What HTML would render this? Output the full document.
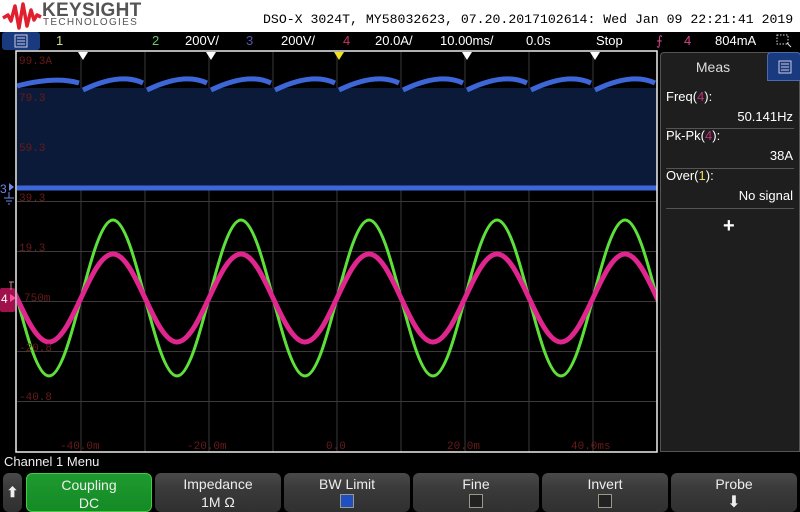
<!DOCTYPE html>
<html><head><meta charset="utf-8"><style>
*{margin:0;padding:0;box-sizing:border-box}
body{width:800px;height:512px;background:#000;overflow:hidden;position:relative;font-family:"Liberation Sans",sans-serif;color:#fff}
.hdr{position:absolute;left:0;top:0;width:800px;height:32px;background:#fff}
.stat{position:absolute;left:0;top:32px;width:800px;height:18px;background:#000;font-size:13px}
.stat span{position:absolute;top:1px}
.panel{position:absolute;left:660px;top:52px;width:140px;height:400px;background:#1e1e1e;border:1px solid #555;border-radius:4px 4px 0 0}
.btn{position:absolute;top:473px;height:39px;border-radius:6px;background:linear-gradient(#4a4a4a,#3a3a3a 40%,#303030);font-size:14px;text-align:center;color:#eee;line-height:18px;padding-top:2px}
.chk{display:inline-block;width:14px;height:14px;border:1px solid #998;background:#222;vertical-align:top;margin-top:1px}
</style></head><body>
<div class="hdr">
<svg width="40" height="30" style="position:absolute;left:2px;top:2px" viewBox="0 0 40 30"><path d="M1,16 L6,13 L9,19 L13,4 L17,26 L21,2 L25,24 L29,8 L32,18 L35,13 L39,15" fill="none" stroke="#e0202e" stroke-width="3.5" stroke-linejoin="round"/></svg>
<div style="position:absolute;left:42px;top:0px;font-size:19px;font-weight:bold;color:#555;letter-spacing:0.3px">KEYSIGHT</div>
<div style="position:absolute;left:43px;top:17px;font-size:10px;color:#555;letter-spacing:1.3px">TECHNOLOGIES</div>
<div style="position:absolute;left:263px;top:12px;font-family:'Liberation Mono',monospace;font-size:13.2px;color:#000;white-space:nowrap">DSO-X 3024T, MY58032623, 07.20.2017102614: Wed Jan 09 22:21:41 2019</div>
</div>
<div class="stat">
<div style="position:absolute;left:2px;top:0;width:38px;height:18px;background:#1a3a80;border-radius:3px"></div>
<svg width="14" height="14" style="position:absolute;left:14px;top:2px"><rect x="1" y="1" width="12" height="12" fill="none" stroke="#ccd" /><path d="M3,4H11M3,7H11M3,10H11" stroke="#ccd"/></svg>
<span style="left:56px;color:#cde080">1</span>
<span style="left:152px;color:#6c6">2</span><span style="left:185px">200V/</span>
<span style="left:246px;color:#55a">3</span><span style="left:281px">200V/</span>
<span style="left:343px;color:#c36">4</span><span style="left:375px">20.0A/</span>
<span style="left:440px">10.00ms/</span><span style="left:526px">0.0s</span>
<span style="left:596px">Stop</span>
<span style="left:656px;color:#d2478a">&#x2A0D;</span><span style="left:684px;color:#d2478a">4</span>
<span style="left:715px">804mA</span>
<svg width="16" height="14" style="position:absolute;left:776px;top:2px"><rect x="1" y="1" width="11" height="9" fill="none" stroke="#ddd" stroke-dasharray="1.5,1.5"/><path d="M11,9L15,13" stroke="#ddd"/></svg>
</div>
<svg width="800" height="512" style="position:absolute;left:0;top:0">
<defs><clipPath id="c"><rect x="17" y="52" width="640" height="400"/></clipPath></defs>
<g stroke="#3a3a3a" stroke-width="1">
<path d="M81,52V452M145,52V452M209,52V452M273,52V452M337,52V452M401,52V452M465,52V452M529,52V452M593,52V452"/>
<path d="M17,101.5H657M17,151.5H657M17,201.5H657M17,251.5H657M17,301.5H657M17,351.5H657M17,401.5H657"/>
</g>
<g clip-path="url(#c)">
<rect x="17" y="88" width="640" height="100" fill="#0b1a38"/>
<g fill="none" stroke="#3d66d8" stroke-width="5">
<path d="M17,86 Q55,76 79,83 M83,90 Q120,72 143,83 M147,90 Q184,72 207,83 M211,90 Q248,72 271,83 M275,90 Q312,72 335,83 M339,90 Q376,72 399,83 M403,90 Q440,72 463,83 M467,90 Q504,72 527,83 M531,90 Q568,72 591,83 M595,90 Q632,72 655,83"/>
<path d="M17,188H657" stroke-width="5"/>
</g>
<path fill="none" stroke="#5ee03a" stroke-width="3" d="M-47,298 c10.43,-39.95 20.75,-78 32,-78 c11.25,0 21.57,38.05 32,78 c10.43,39.95 20.75,78 32,78 c11.25,0 21.57,-38.05 32,-78 c10.43,-39.95 20.75,-78 32,-78 c11.25,0 21.57,38.05 32,78 c10.43,39.95 20.75,78 32,78 c11.25,0 21.57,-38.05 32,-78 c10.43,-39.95 20.75,-78 32,-78 c11.25,0 21.57,38.05 32,78 c10.43,39.95 20.75,78 32,78 c11.25,0 21.57,-38.05 32,-78 c10.43,-39.95 20.75,-78 32,-78 c11.25,0 21.57,38.05 32,78 c10.43,39.95 20.75,78 32,78 c11.25,0 21.57,-38.05 32,-78 c10.43,-39.95 20.75,-78 32,-78 c11.25,0 21.57,38.05 32,78 c10.43,39.95 20.75,78 32,78 c11.25,0 21.57,-38.05 32,-78 c10.43,-39.95 20.75,-78 32,-78 c11.25,0 21.57,38.05 32,78 c10.43,39.95 20.75,78 32,78 c11.25,0 21.57,-38.05 32,-78 c10.43,-39.95 20.75,-78 32,-78 c11.25,0 21.57,38.05 32,78 c10.43,39.95 20.75,78 32,78 c11.25,0 21.57,-38.05 32,-78"/>
<path fill="none" stroke="#e0268e" stroke-width="5" d="M-47,298 c10.43,-22.54 20.75,-44 32,-44 c11.25,0 21.57,21.46 32,44 c10.43,22.54 20.75,44 32,44 c11.25,0 21.57,-21.46 32,-44 c10.43,-22.54 20.75,-44 32,-44 c11.25,0 21.57,21.46 32,44 c10.43,22.54 20.75,44 32,44 c11.25,0 21.57,-21.46 32,-44 c10.43,-22.54 20.75,-44 32,-44 c11.25,0 21.57,21.46 32,44 c10.43,22.54 20.75,44 32,44 c11.25,0 21.57,-21.46 32,-44 c10.43,-22.54 20.75,-44 32,-44 c11.25,0 21.57,21.46 32,44 c10.43,22.54 20.75,44 32,44 c11.25,0 21.57,-21.46 32,-44 c10.43,-22.54 20.75,-44 32,-44 c11.25,0 21.57,21.46 32,44 c10.43,22.54 20.75,44 32,44 c11.25,0 21.57,-21.46 32,-44 c10.43,-22.54 20.75,-44 32,-44 c11.25,0 21.57,21.46 32,44 c10.43,22.54 20.75,44 32,44 c11.25,0 21.57,-21.46 32,-44 c10.43,-22.54 20.75,-44 32,-44 c11.25,0 21.57,21.46 32,44 c10.43,22.54 20.75,44 32,44 c11.25,0 21.57,-21.46 32,-44"/>
</g>
<g font-family="Liberation Mono,monospace" font-size="11" fill="#6a1a1a">
<text x="19" y="64">99.3A</text><text x="19" y="101">79.3</text><text x="19" y="151">59.3</text><text x="19" y="201">39.3</text><text x="19" y="251">19.3</text><text x="24" y="301">750m</text><text x="19" y="351">-20.8</text><text x="19" y="400">-40.8</text>
<text x="60" y="449">-40.0m</text><text x="187" y="449">-20.0m</text><text x="326" y="449">0.0</text><text x="447" y="449">20.0m</text><text x="571" y="449">40.0ms</text>
</g>
<path d="M16,51H657V452H16Z" fill="none" stroke="#eee" stroke-width="1.5"/>
<g fill="#fff"><path d="M78,52h10l-5,8z M206,52h10l-5,8z M462,52h10l-5,8z M590,52h10l-5,8z"/></g>
<path d="M334,52h10l-5,8z" fill="#f0e020"/>
<text x="0" y="193" font-size="12" fill="#6a8ae8">3</text>
<path d="M9,183l5,4l-5,4z" fill="#6a8ae8"/>
<path d="M9,192v6M4,198h10M6,201h6M8,204h2" stroke="#6a8ae8"/>
<rect x="0" y="288" width="15" height="24" rx="2" fill="#a0104a"/>
<text x="1" y="303" font-size="12" fill="#fff">4</text>
<path d="M10,294l6,4l-6,4z" fill="#ff4fa0"/>
<path d="M9,282H14M11,282V290" stroke="#d080a0"/>
</svg>
<div class="panel">
<div style="position:absolute;left:0;top:0;width:104px;height:28px;text-align:center;font-size:14px;color:#ddd;line-height:28px">Meas</div>
<div style="position:absolute;left:106px;top:-1px;width:34px;height:29px;background:#1a3a80;border-radius:4px 4px 0 0;border:1px solid #4a6ab0"></div>
<svg width="14" height="14" style="position:absolute;left:117px;top:7px"><rect x="1" y="1" width="12" height="12" fill="none" stroke="#ccd"/><path d="M3,4H11M3,7H11M3,10H11" stroke="#ccd"/></svg>
<div style="position:absolute;left:5px;top:36px;font-size:13px">Freq(<span style="color:#c0307a">4</span>):</div>
<div style="position:absolute;right:6px;top:56px;font-size:13px">50.141Hz</div>
<div style="position:absolute;left:5px;top:75px;width:128px;border-top:1px solid #555"></div>
<div style="position:absolute;left:5px;top:75px;font-size:13px">Pk-Pk(<span style="color:#c0307a">4</span>):</div>
<div style="position:absolute;right:6px;top:95px;font-size:13px">38A</div>
<div style="position:absolute;left:5px;top:115px;width:128px;border-top:1px solid #555"></div>
<div style="position:absolute;left:5px;top:115px;font-size:13px">Over(<span style="color:#e8e060">1</span>):</div>
<div style="position:absolute;right:6px;top:135px;font-size:13px">No signal</div>
<div style="position:absolute;left:5px;top:155px;width:128px;border-top:1px solid #555"></div>
<div style="position:absolute;left:62px;top:162px;font-size:20px;font-weight:bold">+</div>
</div>
<div style="position:absolute;left:4px;top:454px;font-size:13px;color:#eee">Channel 1 Menu</div>
<div class="btn" style="left:3px;width:19px;padding-top:10px;font-weight:bold">&#x2B06;</div>
<div class="btn" style="left:26px;width:126px;background:linear-gradient(#1e9a30,#158a25);border:1px solid #4c4">Coupling<br>DC</div>
<div class="btn" style="left:155px;width:126px">Impedance<br>1M Ω</div>
<div class="btn" style="left:284px;width:126px">BW Limit<br><span class="chk" style="background:#2050c0"></span></div>
<div class="btn" style="left:413px;width:126px">Fine<br><span class="chk"></span></div>
<div class="btn" style="left:542px;width:126px">Invert<br><span class="chk"></span></div>
<div class="btn" style="left:671px;width:126px">Probe<br><span style="font-size:16px">&#x2B07;</span></div>
</body></html>
